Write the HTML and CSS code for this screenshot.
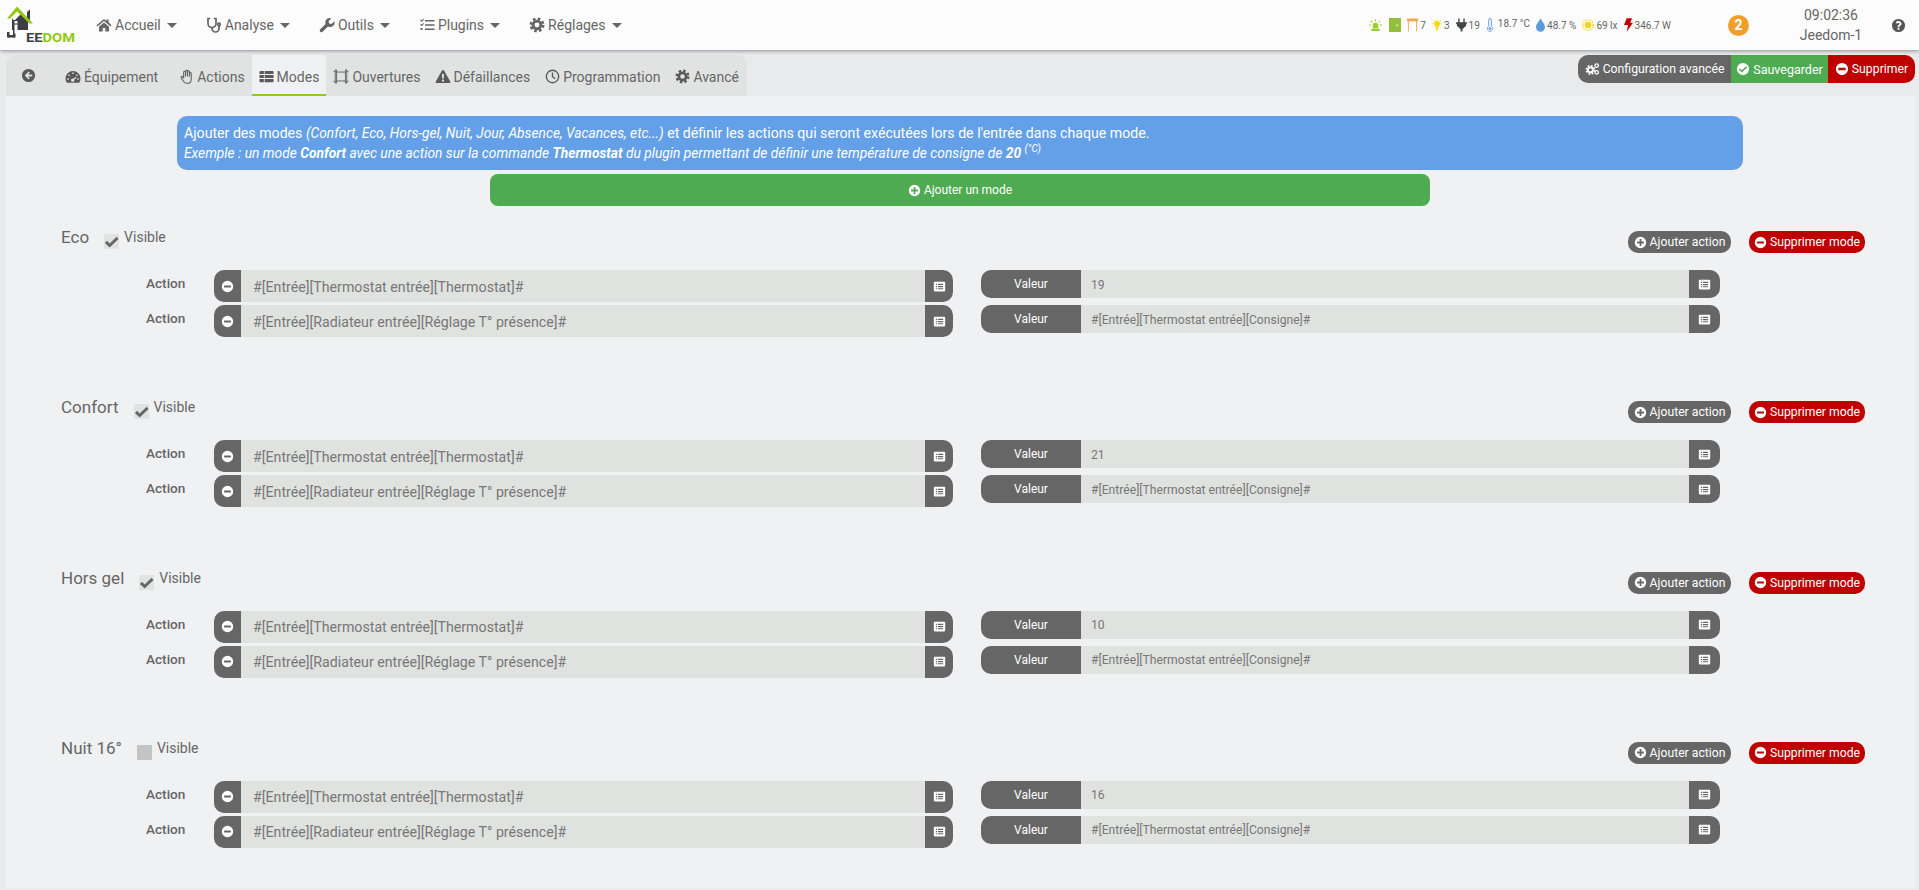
FILE: index.html
```html
<!DOCTYPE html>
<html lang="fr">
<head>
<meta charset="utf-8">
<title>Jeedom - Modes</title>
<link rel="stylesheet" href="styles.css">
</head>
<body>
<svg class="defs" aria-hidden="true">
  <symbol id="home" viewBox="0 0 16 16"><path d="M8 2 .6 8.300l.9 1.100L8 3.900l6.500 5.500.9-1.100L12.500 5V2.500h-2v.800L10.500 4.100z M3 9.700V14.500h3.700v-3.500h2.600v3.500H13V9.700L8 5.500z"/></symbol>
  <symbol id="steth" viewBox="0 0 16 16"><g fill="none" stroke="currentColor" stroke-width="1.700" stroke-linecap="round"><path d="M3.500 1.500H2v5a4 4 0 0 0 8 0v-5H8.500"/><path d="M6 10.500v1a3.500 3.500 0 0 0 7 0V9"/><circle cx="13" cy="7.500" r="1.300"/></g></symbol>
  <symbol id="wrench" viewBox="0 0 16 16"><path d="M15.300 4.300l-2.800 2.800-2.400-.5-.6-2.400L12.300 1.400A4.300 4.300 0 0 0 6.600 6.900L1.200 12.300a1.700 1.700 0 0 0 2.400 2.400L9 9.400a4.300 4.300 0 0 0 6.300-5.100z"/></symbol>
  <symbol id="tasks" viewBox="0 0 16 16"><path d="M6 3h9.500v1.500H6zM6 7.300h9.500v1.500H6zM6 11.600h9.500v1.500H6zM1 3.300l.8-.8.9.9L4.300 1.700l.8.8L2.700 5zM1 7.600l.8-.8.9.9 1.600-1.700.8.8-2.400 2.500zM1.500 11h2v2h-2z"/></symbol>
  <symbol id="cog" viewBox="0 0 16 16"><circle cx="8" cy="8" r="6.200" fill="none" stroke="currentColor" stroke-width="2.600" stroke-dasharray="2.600 2.270"/><circle cx="8" cy="8" r="3.900" fill="none" stroke="currentColor" stroke-width="2.900"/></symbol>
  <symbol id="arrowc" viewBox="0 0 16 16"><path fill-rule="evenodd" d="M8 1a7 7 0 1 0 0 14A7 7 0 0 0 8 1zM8.200 3.800l1.200 1.200L7.600 6.900H12v2.200H7.600l1.800 1.900-1.200 1.200L4 8z"/></symbol>
  <symbol id="gauge" viewBox="0 0 16 16"><path fill-rule="evenodd" d="M8 2a7.500 7.500 0 0 0-6.500 11.200c.2.400.6.600 1 .6h11c.4 0 .8-.2 1-.6A7.500 7.500 0 0 0 8 2zM4 5.200l1 1-1 1-1-1zM8 3.600l.7 0v1.500H7.300V3.600zM12 5.200l1 1-1 1-1-1zM11.500 8.500l-2.300 2.200a1.600 1.600 0 1 1-1-1L10.800 7.800zM2.300 9.300h1.500v1.400H2.300zM12.200 9.300h1.500v1.400h-1.500z"/></symbol>
  <symbol id="hand" viewBox="0 0 16 16"><path fill="none" stroke="currentColor" stroke-width="1.100" stroke-linejoin="round" d="M5 9.300V3.500a1 1 0 0 1 2 0V7.500 2.300a1 1 0 0 1 2 0V7.500 3a1 1 0 0 1 2 0V7.800 4.700a1 1 0 0 1 2 0v6.300c0 2.500-1.500 4.200-3.500 4.200H8.200c-1.500 0-2.300-.6-3-1.600L2.300 9.500c-.7-1.100.7-2.300 1.600-1.200L5 9.500z"/></symbol>
  <symbol id="thlist" viewBox="0 0 16 16"><path d="M1.500 2h3.700v3.300H.5V3a1 1 0 0 1 1-1zM6 2h8.500a1 1 0 0 1 1 1v2.300H6zM.5 6.300H5.200v3.400H.5zM6 6.300h9.500v3.400H6zM.5 10.700H5.200V14H1.500a1 1 0 0 1-1-1zM6 10.700h9.500V13a1 1 0 0 1-1 1H6z"/></symbol>
  <symbol id="frame" viewBox="0 0 18 16"><path fill="none" stroke="currentColor" stroke-width="1" d="M4 3h10v10H4zM2.500.5V15.500M.5 2.500H2.500M.5 13.500H2.500M15.500.5V15.500M15.500 2.500h2M15.500 13.500h2M2.500.5H4V3M14 3V.500h1.500M4 13v2.500H2.500M14 13v2.500h1.500"/></symbol>
  <symbol id="warn" viewBox="0 0 16 16"><path fill-rule="evenodd" d="M8 1c-.5 0-.9.3-1.100.7L.3 13.300c-.5.800.1 1.700 1 1.700h13.400c.9 0 1.500-.9 1-1.700L9.100 1.700C8.900 1.300 8.500 1 8 1zM6.900 5.300h2.200l-.3 5H7.200zM8 11.200a1.200 1.200 0 1 1 0 2.400 1.200 1.200 0 0 1 0-2.400z"/></symbol>
  <symbol id="clock" viewBox="0 0 16 16"><g fill="none" stroke="currentColor"><circle cx="8" cy="8" r="6.600" stroke-width="1.500"/><path d="M8 3.800V8.300l2.800 2" stroke-width="1.400"/></g></symbol>
  <symbol id="cogs" viewBox="0 0 18 16"><g fill="none" stroke="currentColor"><circle cx="6.500" cy="9" r="4.800" stroke-width="2.200" stroke-dasharray="2.100 1.670"/><circle cx="6.500" cy="9" r="3" stroke-width="2.300"/><circle cx="14" cy="3.800" r="2.100" stroke-width="1.500"/><circle cx="14" cy="12" r="2.100" stroke-width="1.500"/></g></symbol>
  <symbol id="check" viewBox="0 0 16 16"><path fill-rule="evenodd" d="M8 1a7 7 0 1 0 0 14A7 7 0 0 0 8 1zM11.500 4.800l1.300 1.300-6 6-3.500-3.500 1.300-1.300 2.200 2.200z"/></symbol>
  <symbol id="minus" viewBox="0 0 16 16"><path fill-rule="evenodd" d="M8 1a7 7 0 1 0 0 14A7 7 0 0 0 8 1zM3.800 6.700h8.400v2.600H3.800z"/></symbol>
  <symbol id="plus" viewBox="0 0 16 16"><path fill-rule="evenodd" d="M8 1a7 7 0 1 0 0 14A7 7 0 0 0 8 1zM6.900 3.800h2.200v3.100h3.100v2.200H9.100v3.100H6.900V9.100H3.800V6.900h3.100z"/></symbol>
  <symbol id="listalt" viewBox="0 0 16 16"><path fill-rule="evenodd" d="M2 2h12a1 1 0 0 1 1 1v10a1 1 0 0 1-1 1H2a1 1 0 0 1-1-1V3a1 1 0 0 1 1-1zM3.500 4.500v1.500H5V4.500zM6 4.500v1.500h6.500V4.500zM3.500 7.300v1.500H5V7.300zM6 7.300v1.500h6.500V7.300zM3.500 10v1.500H5V10zM6 10v1.500h6.500V10z"/></symbol>
  <symbol id="help" viewBox="0 0 16 16"><path fill-rule="evenodd" d="M8 1a7 7 0 1 0 0 14A7 7 0 0 0 8 1zM7 10.500h2v2H7zM8 3.300c1.800 0 3.200 1 3.200 2.700 0 1.200-.7 1.800-1.400 2.300-.6.400-.8.600-.8 1.200H7c0-1.300.5-1.900 1.200-2.400.5-.4.900-.6.900-1.100 0-.5-.5-.8-1.100-.8-.6 0-1.100.3-1.500.9L5 4.900C5.700 3.900 6.600 3.300 8 3.300z"/></symbol>
  <symbol id="s-alarm" viewBox="0 0 14 14"><path d="M4 7a3 3 0 0 1 6 0v3H4zM2.500 10.500h9V13h-9zM6.500 0h1v2.500h-1zM0 6h2.500v1H0zM11.500 6H14v1h-2.500zM1.600 2.300l.7-.7 1.700 1.700-.7.700zM12.400 2.300l-.7-.7L10 3.300l.7.700z"/></symbol>
  <symbol id="s-door" viewBox="0 0 12 14"><path fill-rule="evenodd" d="M0 0h12v14H0zM7.500 6.500v1.500H9V6.500z"/></symbol>
  <symbol id="s-frame" viewBox="0 0 12 14"><path d="M0 0h12v3H0zM1 3h1v11H1zM10 3h1v11h-1z"/></symbol>
  <symbol id="s-bulb" viewBox="0 0 12 14"><path d="M6 2a3.600 3.600 0 0 0-2 6.600V10h4V8.600A3.600 3.600 0 0 0 6 2zM4.300 10.700h3.400v1.300H4.300zM5 12.500h2V14H5zM5.500 0h1v1.500h-1zM0 5h1.500v1H0zM10.500 5H12v1h-1.500zM1.300 1.800l.7-.7 1 1-.7.700zM10.700 1.800l-.7-.7-1 1 .7.700z"/></symbol>
  <symbol id="s-plug" viewBox="0 0 12 14"><path d="M2.500 0H4v4h4V0h1.500v4H12v1.500h-1v2.200L7 11.500V14H5v-2.500L1 7.700V5.500H0V4h2.500z"/></symbol>
  <symbol id="s-therm" viewBox="0 0 9 16"><path fill="none" stroke="currentColor" stroke-width="1" d="M3 9.500V2.200a1.500 1.500 0 0 1 3 0v7.300a3 3 0 1 1-3 0z"/><circle cx="4.500" cy="12" r="1.500" fill="currentColor"/></symbol>
  <symbol id="s-drop" viewBox="0 0 10 15"><path d="M5 0C4 2.500 0 6.500 0 10a5 5 0 0 0 10 0C10 6.500 6 2.500 5 0z"/></symbol>
  <symbol id="s-sun" viewBox="0 0 14 14"><circle cx="7" cy="7" r="3.800"/><circle cx="7" cy="7" r="6" fill="none" stroke="currentColor" stroke-width="2" stroke-dasharray="1 1.360"/></symbol>
  <symbol id="s-bolt" viewBox="0 0 10 15"><path d="M3 0h6L7 5h3L3 15l1.500-7.500H0z"/></symbol>
  <symbol id="tick" viewBox="0 0 16 16"><path d="M1 9.500 3.200 7.300 6 10 13.500 3 15.500 5.200 6 14.500z"/></symbol>
</svg>

<header class="topbar">
  <svg class="logo" viewBox="0 0 70 40" width="70" height="40" role="img" aria-label="Jeedom">
    <path class="logo-dark" d="M7 16 10 13 14 9 20 14V6.500H21.500V5H23V16H21V25H5V13z"/>
    <rect class="logo-dark" x="1" y="30" width="7" height="2.500"/>
    <rect class="logo-dark" x="6" y="15" width="2.500" height="17.500"/>
    <rect class="logo-dark" x="0" y="27" width="2.500" height="5.500"/>
    <rect class="logo-white" x="7.500" y="16" width="3" height="2.500"/>
    <rect class="logo-white" x="7.500" y="19.500" width="3" height="9"/>
    <path class="logo-green" d="M0 13.500 10 1.500 26 18.500H22.500L10 6.500 3 13.500z"/>
    <text class="logo-text" x="19" y="36.500" textLength="49" lengthAdjust="spacingAndGlyphs"><tspan class="logo-ee">EE</tspan><tspan class="logo-dom">DOM</tspan></text>
  </svg>
  <nav class="mainnav">
    <a class="navitem"><svg class="i"><use href="#home"/></svg>Accueil<span class="caret"></span></a>
    <a class="navitem"><svg class="i"><use href="#steth"/></svg>Analyse<span class="caret"></span></a>
    <a class="navitem"><svg class="i"><use href="#wrench"/></svg>Outils<span class="caret"></span></a>
    <a class="navitem"><svg class="i"><use href="#tasks"/></svg>Plugins<span class="caret"></span></a>
    <a class="navitem"><svg class="i"><use href="#cog"/></svg>Réglages<span class="caret"></span></a>
  </nav>
  <div class="status">
    <svg class="si si-alarm"><use href="#s-alarm"/></svg>
    <svg class="si si-door"><use href="#s-door"/></svg>
    <svg class="si si-frame"><use href="#s-frame"/></svg><span class="sv">7</span>
    <svg class="si si-bulb"><use href="#s-bulb"/></svg><span class="sv">3</span>
    <svg class="si si-plug"><use href="#s-plug"/></svg><span class="sv">19</span>
    <svg class="si si-therm"><use href="#s-therm"/></svg><span class="sv sv-up">18.7 °C</span>
    <svg class="si si-drop"><use href="#s-drop"/></svg><span class="sv">48.7 %</span>
    <svg class="si si-sun"><use href="#s-sun"/></svg><span class="sv">69 lx</span>
    <svg class="si si-bolt"><use href="#s-bolt"/></svg><span class="sv sv-last">346.7 W</span>
  </div>
  <span class="badge">2</span>
  <div class="clock"><span>09:02:36</span><span>Jeedom-1</span></div>
  <svg class="i help"><use href="#help"/></svg>
</header>

<div class="tabrow">
  <ul class="tabs">
    <li class="tab tab-back"><svg class="i"><use href="#arrowc"/></svg></li>
    <li class="tab tab-eq"><svg class="i i-gauge"><use href="#gauge"/></svg>Équipement</li>
    <li class="tab tab-act"><svg class="i"><use href="#hand"/></svg>Actions</li>
    <li class="tab active"><svg class="i"><use href="#thlist"/></svg>Modes</li>
    <li class="tab"><svg class="i i-frame"><use href="#frame"/></svg>Ouvertures</li>
    <li class="tab tab-def"><svg class="i"><use href="#warn"/></svg>Défaillances</li>
    <li class="tab tab-prog"><svg class="i"><use href="#clock"/></svg>Programmation</li>
    <li class="tab"><svg class="i"><use href="#cog"/></svg>Avancé</li>
  </ul>
  <div class="btnbar">
    <a class="bb bb-gray"><svg class="i"><use href="#cogs"/></svg>Configuration avancée</a>
    <a class="bb bb-green"><svg class="i"><use href="#check"/></svg>Sauvegarder</a>
    <a class="bb bb-red"><svg class="i"><use href="#minus"/></svg>Supprimer</a>
  </div>
</div>

<main class="panel">
  <div class="notice">
    <div>Ajouter des modes <em>(Confort, Eco, Hors-gel, Nuit, Jour, Absence, Vacances, etc...)</em> et définir les actions qui seront exécutées lors de l'entrée dans chaque mode.</div>
    <div><em>Exemple : un mode <strong>Confort</strong> avec une action sur la commande <strong>Thermostat</strong> du plugin permettant de définir une température de consigne de <strong>20</strong> <sup>(°C)</sup></em></div>
  </div>
  <a class="addmode"><svg class="i"><use href="#plus"/></svg>Ajouter un mode</a>

  <section class="mode">
    <div class="modehead">
      <span class="modename">Eco</span>
      <label class="vis"><span class="box on"><svg><use href="#tick"/></svg></span>Visible</label>
      <div class="modebtns"><a class="pill pill-gray"><svg class="i"><use href="#plus"/></svg>Ajouter action</a><a class="pill pill-red"><svg class="i"><use href="#minus"/></svg>Supprimer mode</a></div>
    </div>
    <div class="row">
      <span class="rowlabel">Action</span>
      <div class="grp"><span class="addon addon-l"><svg class="i"><use href="#minus"/></svg></span><input class="inp" readonly value="#[Entrée][Thermostat entrée][Thermostat]#"><span class="addon addon-r"><svg class="i"><use href="#listalt"/></svg></span></div>
      <div class="grp grp-val"><span class="addon addon-l addon-val">Valeur</span><input class="inp" readonly value="19"><span class="addon addon-r addon-w"><svg class="i"><use href="#listalt"/></svg></span></div>
    </div>
    <div class="row">
      <span class="rowlabel">Action</span>
      <div class="grp"><span class="addon addon-l"><svg class="i"><use href="#minus"/></svg></span><input class="inp" readonly value="#[Entrée][Radiateur entrée][Réglage T° présence]#"><span class="addon addon-r"><svg class="i"><use href="#listalt"/></svg></span></div>
      <div class="grp grp-val"><span class="addon addon-l addon-val">Valeur</span><input class="inp" readonly value="#[Entrée][Thermostat entrée][Consigne]#"><span class="addon addon-r addon-w"><svg class="i"><use href="#listalt"/></svg></span></div>
    </div>
  </section>

  <section class="mode">
    <div class="modehead">
      <span class="modename">Confort</span>
      <label class="vis"><span class="box on"><svg><use href="#tick"/></svg></span>Visible</label>
      <div class="modebtns"><a class="pill pill-gray"><svg class="i"><use href="#plus"/></svg>Ajouter action</a><a class="pill pill-red"><svg class="i"><use href="#minus"/></svg>Supprimer mode</a></div>
    </div>
    <div class="row">
      <span class="rowlabel">Action</span>
      <div class="grp"><span class="addon addon-l"><svg class="i"><use href="#minus"/></svg></span><input class="inp" readonly value="#[Entrée][Thermostat entrée][Thermostat]#"><span class="addon addon-r"><svg class="i"><use href="#listalt"/></svg></span></div>
      <div class="grp grp-val"><span class="addon addon-l addon-val">Valeur</span><input class="inp" readonly value="21"><span class="addon addon-r addon-w"><svg class="i"><use href="#listalt"/></svg></span></div>
    </div>
    <div class="row">
      <span class="rowlabel">Action</span>
      <div class="grp"><span class="addon addon-l"><svg class="i"><use href="#minus"/></svg></span><input class="inp" readonly value="#[Entrée][Radiateur entrée][Réglage T° présence]#"><span class="addon addon-r"><svg class="i"><use href="#listalt"/></svg></span></div>
      <div class="grp grp-val"><span class="addon addon-l addon-val">Valeur</span><input class="inp" readonly value="#[Entrée][Thermostat entrée][Consigne]#"><span class="addon addon-r addon-w"><svg class="i"><use href="#listalt"/></svg></span></div>
    </div>
  </section>

  <section class="mode">
    <div class="modehead">
      <span class="modename">Hors gel</span>
      <label class="vis"><span class="box on"><svg><use href="#tick"/></svg></span>Visible</label>
      <div class="modebtns"><a class="pill pill-gray"><svg class="i"><use href="#plus"/></svg>Ajouter action</a><a class="pill pill-red"><svg class="i"><use href="#minus"/></svg>Supprimer mode</a></div>
    </div>
    <div class="row">
      <span class="rowlabel">Action</span>
      <div class="grp"><span class="addon addon-l"><svg class="i"><use href="#minus"/></svg></span><input class="inp" readonly value="#[Entrée][Thermostat entrée][Thermostat]#"><span class="addon addon-r"><svg class="i"><use href="#listalt"/></svg></span></div>
      <div class="grp grp-val"><span class="addon addon-l addon-val">Valeur</span><input class="inp" readonly value="10"><span class="addon addon-r addon-w"><svg class="i"><use href="#listalt"/></svg></span></div>
    </div>
    <div class="row">
      <span class="rowlabel">Action</span>
      <div class="grp"><span class="addon addon-l"><svg class="i"><use href="#minus"/></svg></span><input class="inp" readonly value="#[Entrée][Radiateur entrée][Réglage T° présence]#"><span class="addon addon-r"><svg class="i"><use href="#listalt"/></svg></span></div>
      <div class="grp grp-val"><span class="addon addon-l addon-val">Valeur</span><input class="inp" readonly value="#[Entrée][Thermostat entrée][Consigne]#"><span class="addon addon-r addon-w"><svg class="i"><use href="#listalt"/></svg></span></div>
    </div>
  </section>

  <section class="mode">
    <div class="modehead">
      <span class="modename">Nuit 16°</span>
      <label class="vis"><span class="box off"></span>Visible</label>
      <div class="modebtns"><a class="pill pill-gray"><svg class="i"><use href="#plus"/></svg>Ajouter action</a><a class="pill pill-red"><svg class="i"><use href="#minus"/></svg>Supprimer mode</a></div>
    </div>
    <div class="row">
      <span class="rowlabel">Action</span>
      <div class="grp"><span class="addon addon-l"><svg class="i"><use href="#minus"/></svg></span><input class="inp" readonly value="#[Entrée][Thermostat entrée][Thermostat]#"><span class="addon addon-r"><svg class="i"><use href="#listalt"/></svg></span></div>
      <div class="grp grp-val"><span class="addon addon-l addon-val">Valeur</span><input class="inp" readonly value="16"><span class="addon addon-r addon-w"><svg class="i"><use href="#listalt"/></svg></span></div>
    </div>
    <div class="row">
      <span class="rowlabel">Action</span>
      <div class="grp"><span class="addon addon-l"><svg class="i"><use href="#minus"/></svg></span><input class="inp" readonly value="#[Entrée][Radiateur entrée][Réglage T° présence]#"><span class="addon addon-r"><svg class="i"><use href="#listalt"/></svg></span></div>
      <div class="grp grp-val"><span class="addon addon-l addon-val">Valeur</span><input class="inp" readonly value="#[Entrée][Thermostat entrée][Consigne]#"><span class="addon addon-r addon-w"><svg class="i"><use href="#listalt"/></svg></span></div>
    </div>
  </section>
</main>
</body>
</html>
```
FILE: styles.css
```css
* { box-sizing: border-box; }
html, body { margin: 0; height: 100%; }
body {
  background: #e9eaec;
  color: #666;
  font-family: Roboto, "Liberation Sans", sans-serif;
  font-size: 14px;
  overflow: hidden;
  height: 890px;
}
.defs { display: none; }
.i { width: 16px; height: 16px; fill: currentColor; flex: none; }

/* top bar */
.topbar {
  height: 50px;
  background: #fcfcfc;
  box-shadow: 0 1px 4px rgba(0,0,0,.4);
  display: flex;
  align-items: center;
  position: relative;
  padding-left: 7px;
}
.logo { flex: none; }
.logo-dark { fill: #3d3f44; }
.logo-white { fill: #fcfcfc; }
.logo-green { fill: #93c90e; }
.logo-text { font-family: Roboto, sans-serif; font-weight: 700; font-size: 13px; }
.logo-ee { fill: #3d3f44; }
.logo-dom { fill: #93c90e; }
.mainnav { display: flex; margin-left: 19px; }
.navitem {
  display: flex;
  align-items: center;
  font-size: 14px;
  color: #666;
  margin-right: 29px;
}
.navitem .i { margin-right: 3px; }
.caret {
  width: 0; height: 0;
  margin-left: 6px;
  border-left: 5px solid transparent;
  border-right: 5px solid transparent;
  border-top: 5px solid #666;
}
.status {
  display: flex;
  align-items: center;
  margin-left: auto;
  font-size: 10px;
  color: #666;
}
.si { display: block; fill: currentColor; flex: none; }
.sv { margin-left: 2px; margin-right: 6px; }
.sv-up { margin-bottom: 4px; margin-left: 4px; }
.sv-last { margin-right: 0; }
.si-alarm { width: 13px; height: 13px; color: #9ccb2e; margin-right: 7px; }
.si-door { width: 12px; height: 14px; color: #93c03a; margin-right: 6px; }
.si-frame { width: 11px; height: 14px; color: #f0a848; }
.si-bulb { width: 10px; height: 14px; color: #f5d90a; }
.si-plug { width: 11px; height: 14px; color: #444; }
.si-therm { width: 8px; height: 16px; color: #5b9bdc; }
.si-drop { width: 9px; height: 14px; color: #5b9bdc; }
.si-sun { width: 12px; height: 12px; color: #f3d71a; }
.si-bolt { width: 9px; height: 14px; color: #c00000; }
.badge {
  width: 21px; height: 21px;
  border-radius: 50%;
  background: #f0a02a;
  color: #fff;
  font-weight: 700;
  font-size: 14px;
  display: flex; align-items: center; justify-content: center;
  margin-left: 57px;
}
.clock {
  display: flex;
  flex-direction: column;
  align-items: center;
  width: 100px;
  margin-left: 32px;
  line-height: 20px;
  font-size: 14px;
  color: #666;
}
.help { margin-left: 10px; margin-right: 13px; width: 15px; height: 15px; color: #555; }

/* tab row */
.tabrow {
  display: flex;
  justify-content: space-between;
  align-items: flex-start;
  padding: 5px 4px 0 6px;
  height: 46px;
}
.tabs {
  list-style: none;
  margin: 0;
  padding: 0 1px 0 0;
  display: flex;
  height: 41px;
  background: #e1e3e2;
  border-radius: 10px 10px 0 0;
}
.tab {
  display: flex;
  align-items: center;
  padding: 2px 7px 0;
  gap: 3px;
  font-size: 14px;
  color: #666;
}
.tab .i { color: #5a5a5a; width: 15px; height: 15px; }
.tab-back { width: 52px; padding: 0 0 0 15px; }
.tab-eq { padding-right: 14px; }
.tab .i-gauge { width: 16px; height: 16px; }
.tab .i-frame { width: 16px; height: 15px; }
.tab-def { padding-right: 8px; }
.tab-def .i { width: 16px; }
.tab-prog { padding-right: 8px; }
.tab.active { background: #f0f1f3; border-bottom: 2px solid #93c90e; padding-top: 4px; }
.btnbar { display: flex; height: 28px; }
.bb {
  display: flex;
  align-items: center;
  justify-content: center;
  gap: 3px;
  color: #fff;
  font-size: 12.250px;
}
.bb .i { width: 14px; height: 14px; }
.bb-gray { width: 153px; background: #666; border-radius: 10px 0 0 10px; }
.bb-gray .i { width: 15px; }
.bb-green { width: 97px; background: #4eab52; font-size: 12.500px; }
.bb-red { width: 87px; background: #bf0000; border-radius: 0 10px 10px 0; }

/* panel */
.panel {
  margin: 0 4px 0 6px;
  height: 792px;
  background: #f0f1f3;
  padding: 20px 0 0;
  display: flex;
  flex-direction: column;
}
.notice {
  margin: 0 172px 0 171px;
  height: 54px;
  padding: 7px 7px;
  background: #64a0e8;
  border-radius: 10px;
  color: #fff;
  font-size: 14.150px;
  line-height: 20px;
}
.notice em { font-size: 13.770px; }
.notice sup { font-size: 10px; line-height: 0; }
.addmode {
  margin: 4px 485px 0 484px;
  height: 32px;
  flex: none;
  background: #4eab52;
  border-radius: 8px;
  color: #fff;
  font-size: 12px;
  display: flex;
  align-items: center;
  justify-content: center;
  gap: 3px;
}
.addmode .i { width: 13px; height: 13px; }

/* modes */
.mode { height: 170.330px; flex: none; padding-left: 55px; }
.mode:first-of-type { margin-top: 19px; }
.modehead { display: flex; align-items: flex-start; height: 45px; }
.modename { font-size: 17px; line-height: 24px; }
.vis { display: flex; align-items: flex-start; font-size: 14px; line-height: 24px; margin-left: 15px; }
.box {
  width: 15px; height: 15px;
  margin: 9px 5px 0 0;
  display: block;
  flex: none;
}
.box.on { background: #e1e3e2; }
.box.off { background: #c4c4c4; }
.box svg { display: block; width: 15px; height: 15px; fill: #666; }
.modebtns { margin-left: auto; margin-right: 50px; display: flex; gap: 18px; padding-top: 6px; }
.pill {
  display: flex;
  align-items: center;
  justify-content: center;
  gap: 3px;
  height: 22px;
  border-radius: 10px;
  color: #fff;
  font-size: 12.200px;
}
.pill .i { width: 13px; height: 13px; }
.pill-gray { width: 103px; background: #666; }
.pill-red { width: 116px; background: #bf0000; }
.row { display: flex; height: 35px; align-items: flex-start; }
.rowlabel {
  width: 153px;
  padding-left: 85px;
  font-size: 13.600px;
  font-weight: 500;
  line-height: 27px;
  color: #666;
  flex: none;
}
.grp { display: flex; width: 739px; height: 32px; flex: none; }
.grp-val { height: 28px; margin-left: 28px; }
.addon {
  background: #666;
  color: #fff;
  display: flex;
  align-items: center;
  justify-content: center;
  flex: none;
  font-size: 12px;
}
.addon .i { width: 13px; height: 13px; }
.addon-l { width: 27px; border-radius: 10px 0 0 10px; }
.addon-r { width: 28px; border-radius: 0 10px 10px 0; }
.addon-val { width: 100px; }
.addon-w { width: 31px; }
.inp {
  flex: 1;
  min-width: 0;
  border: 0;
  outline: 0;
  background: #e0e2e0;
  color: #777;
  font-family: Roboto, sans-serif;
  font-size: 14.200px;
  padding: 1px 12px 0;
}
.grp-val .inp { font-size: 12.150px; padding: 1px 10px 0; }
```
